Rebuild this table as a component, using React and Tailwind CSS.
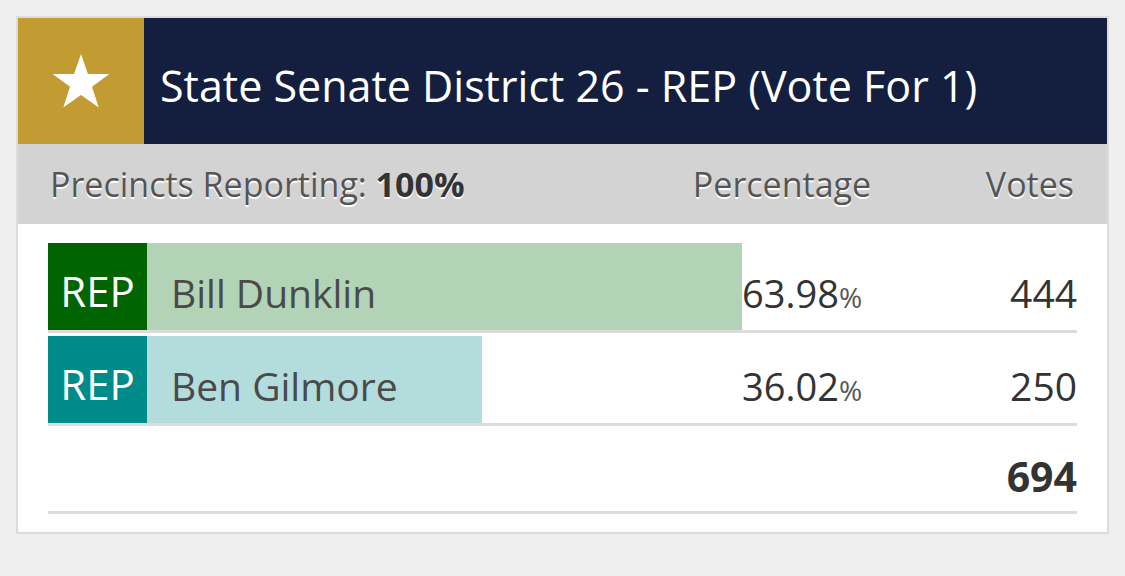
import React from 'react'

const CANDIDATES = [
    { party: 'REP', name: 'Bill Dunklin', pct: 63.98, votes: 444, dark: 'bg-[#006400]', light: 'bg-[#b2d3b6]' },
    { party: 'REP', name: 'Ben Gilmore', pct: 36.02, votes: 250, dark: 'bg-[#008b8b]', light: 'bg-[#b3dcdc]' },
]

function Star() {
    return (
        <svg viewBox="0 0 100 95" className="w-[58px] h-[56px]" fill="#ffffff">
            <polygon points="50,1 62,35.5 99,35.5 69,57.5 80.5,93 50,71.5 19.5,93 31,57.5 1,35.5 38,35.5" />
        </svg>
    )
}

function CandidateRow({ c }) {
    return (
        <div className="pt-[3px] border-b-[3px] border-[#dcdcdc]">
            <div className="flex h-[87px]">
                <div className={`w-[99px] shrink-0 ${c.dark} flex items-end justify-center pb-[18px] text-white text-[42px] leading-none`}>
                    {c.party}
                </div>
                <div className="relative flex-1">
                    <div className={`absolute inset-y-0 left-0 ${c.light}`} style={{ width: `${c.pct}%` }} />
                    <div className="relative h-full flex flex-col justify-end pb-[18px]">
                        <div className="flex items-baseline leading-none">
                            <div className="w-[595px] pl-[24px] text-[#4a4a4a] text-[39px]">{c.name}</div>
                            <div className="text-[#333] text-[38px]">
                                {c.pct.toFixed(2)}
                                <span className="text-[28px] text-[#555]">%</span>
                            </div>
                            <div className="ml-auto text-[#333] text-[39px]">{c.votes}</div>
                        </div>
                    </div>
                </div>
            </div>
        </div>
    )
}

export default function App() {
    const total = CANDIDATES.reduce((s, c) => s + c.votes, 0)
    return (
        <div className="min-h-screen bg-[#efefef] p-4" style={{ fontFamily: '"Open Sans", "Noto Sans", sans-serif' }}>
            <div className="w-[1093px] border-2 border-[#dcdcdc] bg-white">
                <div className="flex h-[126px] bg-[#141f3f]">
                    <div className="w-[126px] shrink-0 bg-[#c29b33] flex items-center justify-center">
                        <Star />
                    </div>
                    <div className="flex items-center pl-4 text-white text-[43px] leading-none pt-[8px]">
                        State Senate District 26 - REP (Vote For 1)
                    </div>
                </div>
                <div className="h-[80px] bg-[#d3d3d3] flex items-center pl-8 pr-[33px] text-[#555] text-[34px] leading-none [text-shadow:0_2px_0_#fff]">
                    <div className="flex-1">
                        Precincts Reporting: <span className="font-bold text-[#333]">100%</span>
                    </div>
                    <div className="w-[293px]">Percentage</div>
                    <div>Votes</div>
                </div>
                <div className="px-[30px] pt-4 pb-[18px]">
                    {CANDIDATES.map((c) => (
                        <CandidateRow key={c.name} c={c} />
                    ))}
                    <div className="h-[88px] border-b-[3px] border-[#dcdcdc] flex items-end justify-end pb-[14px]">
                        <span className="font-bold text-[#333] text-[41px] leading-none">{total}</span>
                    </div>
                </div>
            </div>
        </div>
    )
}
